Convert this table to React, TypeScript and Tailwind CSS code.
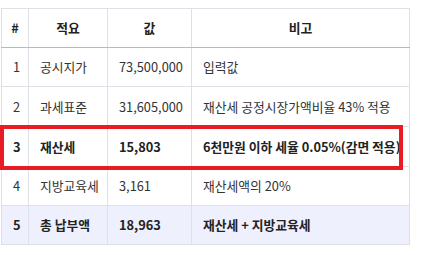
import React from 'react'

type Row = { no: string; item: string; value: string; note: string; strong?: boolean; total?: boolean }

const rows: Row[] = [
  { no: '1', item: '공시지가', value: '73,500,000', note: '입력값' },
  { no: '2', item: '과세표준', value: '31,605,000', note: '재산세 공정시장가액비율 43% 적용' },
  { no: '3', item: '재산세', value: '15,803', note: '6천만원 이하 세율 0.05%(감면 적용)', strong: true },
  { no: '4', item: '지방교육세', value: '3,161', note: '재산세액의 20%' },
  { no: '5', item: '총 납부액', value: '18,963', note: '재산세 + 지방교육세', strong: true, total: true },
]

const heights = ['h-[39px]', 'h-[40px]', 'h-[40px]', 'h-[39px]', 'h-[39px]']

export default function App() {
  return (
    <div
      className="relative w-[426px] h-[255px] bg-white pt-[8px] pl-[1px] text-[12.8px] text-[#333]"
      style={{ fontFamily: '"Noto Sans CJK KR", "Noto Sans", sans-serif' }}
    >
      <table className="border-collapse table-fixed w-[408px]">
        <colgroup>
          <col className="w-[27px]" />
          <col className="w-[79px]" />
          <col className="w-[84px]" />
          <col className="w-[218px]" />
        </colgroup>
        <thead>
          <tr className="h-[39px]">
            {['#', '적요', '값', '비고'].map((h) => (
              <th
                key={h}
                className="border border-[#dde1e7] border-b-[#a9bade] text-center font-bold text-[#222] p-0"
              >
                {h}
              </th>
            ))}
          </tr>
        </thead>
        <tbody>
          {rows.map((r, i) => (
            <tr key={r.no} className={`${heights[i]} ${r.total ? 'bg-[#eef0fd]' : ''} ${r.strong ? 'font-semibold text-[#222]' : ''}`}>
              <td className="border border-[#dde1e7] pl-[11px] p-0 whitespace-nowrap">{r.no}</td>
              <td className="border border-[#dde1e7] pl-[11px] p-0 whitespace-nowrap">{r.item}</td>
              <td className="border border-[#dde1e7] pl-[11px] p-0 whitespace-nowrap">{r.value}</td>
              <td className="border border-[#dde1e7] pl-[11px] p-0 whitespace-nowrap">{r.note}</td>
            </tr>
          ))}
        </tbody>
      </table>
      {/* highlight box around row 3 */}
      <div className="absolute left-0 top-[125px] w-[403px] h-[45px] border-[4px] border-[#e81c24] pointer-events-none" />
    </div>
  )
}
